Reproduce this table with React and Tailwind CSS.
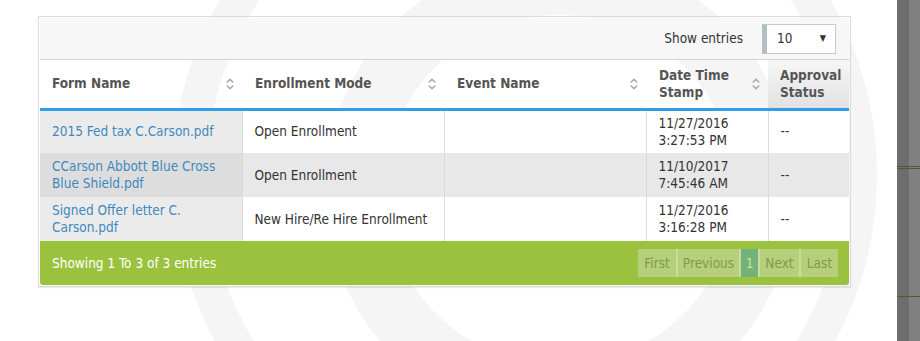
const rows = [
  { form: '2015 Fed tax C.Carson.pdf', mode: 'Open Enrollment', date: '11/27/2016', time: '3:27:53 PM' },
  { form: 'CCarson Abbott Blue Cross Blue Shield.pdf', mode: 'Open Enrollment', date: '11/10/2017', time: '7:45:46 AM' },
  { form: 'Signed Offer letter C. Carson.pdf', mode: 'New Hire/Re Hire Enrollment', date: '11/27/2016', time: '3:16:28 PM' },
]

function SortIcon() {
  return (
    <svg width="8" height="14" viewBox="0 0 8 14" className="shrink-0">
      <g fill="none" stroke="#a9a9a9" strokeWidth="1.6" strokeLinecap="round" strokeLinejoin="round">
        <path d="M1.2 5 L4 2.2 L6.8 5" />
        <path d="M1.2 9 L4 11.8 L6.8 9" />
      </g>
    </svg>
  )
}

function Watermark() {
  return (
    <svg className="absolute inset-0" width="897" height="341" viewBox="0 0 897 341">
      <g fill="none" stroke="#f5f5f5">
        <circle cx="525" cy="175" r="335" strokeWidth="34" />
        <circle cx="560" cy="190" r="205" strokeWidth="60" />
      </g>
    </svg>
  )
}

export default function App() {
  return (
    <div className="w-[920px] h-[341px] flex bg-white overflow-hidden [font-family:'DejaVu_Sans_Condensed','DejaVu_Sans',sans-serif] text-[13.5px]">
      <div className="relative flex-1">
        <Watermark />

        <div className="relative ml-[38px] mt-[16px] w-[813px] border border-[#dcdcdc] p-px shadow-[0_1px_1px_rgba(0,0,0,0.08)]">
          {/* toolbar */}
          <div className="h-[42px] bg-[#f7f7f7] border-b border-[#d2d2d2] flex items-center justify-end pr-[13px]">
            <span className="text-[#333] mr-[19px]">Show entries</span>
            <div className="w-[74px] h-[30px] bg-white border border-[#c9c9c9] border-l-[5px] border-l-[#b3bfc7] flex items-center justify-between pl-[10px] pr-[9px]">
              <span className="text-[#333]">10</span>
              <span className="text-[9px] text-[#333]">▼</span>
            </div>
          </div>

          <table className="w-[809px] table-fixed border-collapse">
            <colgroup>
              <col className="w-[202px]" />
              <col className="w-[202px]" />
              <col className="w-[202px]" />
              <col className="w-[122px]" />
              <col className="w-[81px]" />
            </colgroup>
            <thead>
              <tr className="h-[49px] border-b-[3px] border-[#2e9fe6] text-left text-[#555] font-bold leading-[17px]">
                <th className="pl-3 pr-[8px] py-0">
                  <div className="flex items-center justify-between">Form Name<SortIcon /></div>
                </th>
                <th className="pl-[13px] pr-[8px] py-0">
                  <div className="flex items-center justify-between">Enrollment Mode<SortIcon /></div>
                </th>
                <th className="pl-[13px] pr-[8px] py-0">
                  <div className="flex items-center justify-between">Event Name<SortIcon /></div>
                </th>
                <th className="pl-[13px] pr-[8px] py-0">
                  <div className="flex items-center justify-between">
                    <span>Date Time<br />Stamp</span>
                    <SortIcon />
                  </div>
                </th>
                <th className="pl-3 pr-1 py-0 bg-gradient-to-b from-[#f6f6f6] to-[#e2e2e2]">
                  Approval<br />Status
                </th>
              </tr>
            </thead>
            <tbody className="leading-[17px]">
              {rows.map((r, i) => {
                const odd = i % 2 === 1
                return (
                  <tr key={i} className={`${odd ? 'bg-[#e8e8e8]' : 'bg-white'} h-[44px]`}>
                    <td className={`pl-3 pr-2 py-0 text-[#3d89bf] ${odd ? 'bg-[#dddddd]' : 'bg-[#ebebeb]'}`}>
                      {r.form}
                    </td>
                    <td className="border-l border-[#dadada] pl-3 pr-2 py-0 text-[#333]">{r.mode}</td>
                    <td className="border-l border-[#dadada] py-0"></td>
                    <td className="border-l border-[#dadada] pl-3 pr-2 py-0 text-[#333]">
                      {r.date}<br />{r.time}
                    </td>
                    <td className="border-l border-[#dadada] pl-3 py-0 text-[#333]">--</td>
                  </tr>
                )
              })}
            </tbody>
          </table>

          {/* footer */}
          <div className="h-[44px] bg-[#9bc23f] rounded-b-[3px] flex items-center justify-between pl-3 pr-[11px]">
            <span className="text-white">Showing 1 To 3 of 3 entries</span>
            <div className="flex h-[28px] text-[#7f9b4c]">
              <span className="w-[38px] bg-[#b5cf7b] flex items-center justify-center">First</span>
              <span className="w-[63px] bg-[#b5cf7b] border-l-2 border-[#c9dc9f] flex items-center justify-center">Previous</span>
              <span className="w-[19px] bg-[#74b27b] text-[#c8e28e] border-l-2 border-[#c9dc9f] flex items-center justify-center">1</span>
              <span className="w-[41px] bg-[#b5cf7b] border-l-2 border-[#c9dc9f] flex items-center justify-center">Next</span>
              <span className="w-[39px] bg-[#b5cf7b] border-l-2 border-[#c9dc9f] flex items-center justify-center">Last</span>
            </div>
          </div>
        </div>
      </div>

      {/* right edge panel */}
      <div className="w-[23px] h-full flex">
        <div className="w-[12px] h-full bg-[#6d6d6d] flex flex-col">
          <div className="h-[166px]" />
          <div className="h-[3px] border-y border-[#4d5a2c]" />
          <div className="h-[127px]" />
          <div className="h-px bg-[#4d5a2c]" />
        </div>
        <div className="flex-1 h-full bg-[#808080] flex flex-col">
          <div className="h-[166px]" />
          <div className="h-[3px] border-y border-[#4d5a2c]" />
          <div className="h-[127px]" />
          <div className="h-px bg-[#4d5a2c]" />
        </div>
      </div>
    </div>
  )
}
